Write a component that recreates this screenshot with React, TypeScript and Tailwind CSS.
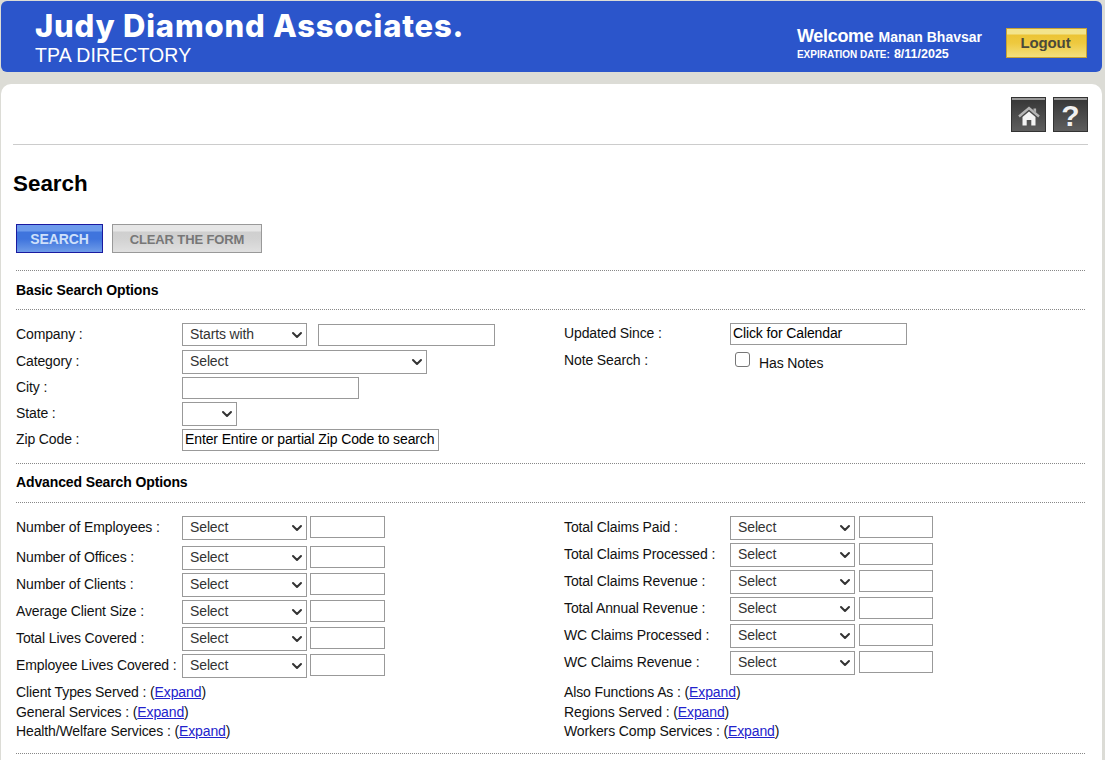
import { ChevronDown } from "lucide-react";

const inputClass =
  "block h-[22px] border border-[#999] bg-white px-[2px] pb-[2px] text-[14px] tracking-[-0.12px] text-black outline-none placeholder:text-black";
const selectClass =
  "block h-full w-full appearance-none rounded-none border border-[#999] bg-white pb-[2px] pl-[7px] text-[14px] tracking-[-0.12px] text-[#333] outline-none";
const iconButton =
  "flex h-[35px] w-[35px] items-center justify-center border border-[#333] bg-[linear-gradient(#999_0,#999_2px,#383838_2px,#5e5e5e_100%)] pt-[2px]";

function Dotted() {
  return <div className="ml-[15px] mr-[17px] border-t border-dotted border-[#888]" />;
}

function Select({ className, value = "Select" }: { className: string; value?: string }) {
  return (
    <div className={`relative ${className}`}>
      <select className={selectClass} defaultValue={value}>
        <option>{value}</option>
      </select>
      <ChevronDown
        className="pointer-events-none absolute right-[2px] top-[4px] h-[16px] w-[16px] text-[#333]"
        strokeWidth={3}
      />
    </div>
  );
}

function NumberRow({ label, rowClass, right }: { label: string; rowClass: string; right?: boolean }) {
  return (
    <div className={`flex items-start ${rowClass}`}>
      <span className="w-[166px] shrink-0 leading-[22px]">{label}</span>
      <Select className="h-[24px] w-[125px]" />
      <input className={`${inputClass} ${right ? "ml-[4px] w-[74px]" : "ml-[3px] w-[75px]"}`} />
    </div>
  );
}

function ExpandRow({ label }: { label: string }) {
  return (
    <div className="h-[19.5px] leading-[19.5px]">
      {label} : (
      <a href="#" className="text-[#2222cc] underline">
        Expand
      </a>
      )
    </div>
  );
}

export default function App() {
  const leftRows = [
    ["Number of Employees :", "h-[30px]"],
    ["Number of Offices :", "h-[27px]"],
    ["Number of Clients :", "h-[27px]"],
    ["Average Client Size :", "h-[27px]"],
    ["Total Lives Covered :", "h-[27px]"],
    ["Employee Lives Covered :", "h-[27px]"],
  ];
  const rightRows = [
    "Total Claims Paid :",
    "Total Claims Processed :",
    "Total Claims Revenue :",
    "Total Annual Revenue :",
    "WC Claims Processed :",
    "WC Claims Revenue :",
  ];

  return (
    <div className="h-[760px] overflow-hidden bg-[#dcdcd6] pt-px font-['Liberation_Sans',Arial,sans-serif] text-[14px] tracking-[-0.12px] text-[#111]">
      <header className="ml-px mr-[3px] flex h-[71px] justify-between rounded-[6px] bg-[#2b55cb] text-white">
        <div className="pl-[34px] pt-[7px]">
          <div className="font-['Inter',sans-serif] text-[31px] font-extrabold leading-[36px] tracking-[0.8px]">
            Judy Diamond Associates.
          </div>
          <div className="pt-px text-[19.5px] leading-[20px] tracking-[0.1px]">TPA DIRECTORY</div>
        </div>
        <div className="flex items-start">
          <div className="pt-[22px] font-bold">
            <div className="flex h-[21px] items-baseline gap-[5px]">
              <span className="text-[18px] tracking-[-0.3px]">Welcome</span>
              <span className="text-[14px] tracking-normal">Manan Bhavsar</span>
            </div>
            <div className="flex h-[21px] items-baseline gap-[4px] pt-px">
              <span className="text-[10px] tracking-normal">EXPIRATION DATE:</span>
              <span className="text-[12.5px] tracking-normal">8/11/2025</span>
            </div>
          </div>
          <button className="ml-[24px] mr-[15px] mt-[27px] h-[30px] w-[81px] border border-[#c8a233] bg-[linear-gradient(#f3e48c_0,#f3e48c_5px,#ecc435_6px,#eec93f_14px,#f3e07e_100%)] pr-[2px] pt-px text-[15px] font-bold text-[#4a4a3a]">
            Logout
          </button>
        </div>
      </header>

      <main className="ml-px mr-[3px] mt-[12px] h-[700px] rounded-t-[10px] bg-white">
        <div className="ml-[12px] mr-[14px] flex h-[61px] items-start justify-end gap-[7px] border-b border-[#ccc] pt-[13px]">
          <button className={iconButton}>
            <svg viewBox="0 0 22 20" className="h-[20px] w-[22px]">
              <path d="M1 10.5 11 2l10 8.5" fill="none" stroke="#b5b5b5" strokeWidth="2.4" />
              <path d="M15.5 2.5h2.6v4l-2.6-2.2z" fill="#b5b5b5" />
              <path d="M4.5 11 11 5.4l6.5 5.6v8.5h-4.2v-5.6H8.7v5.6H4.5z" fill="#f4f4f4" />
            </svg>
          </button>
          <button className={`${iconButton} text-[30px] font-bold leading-none tracking-normal text-[#f0f0f0]`}>
            ?
          </button>
        </div>

        <h1 className="ml-[12px] mt-[26px] text-[22.4px] font-bold leading-[26px] tracking-normal text-black">
          Search
        </h1>

        <div className="ml-[15px] mt-[27px] flex h-[29px] gap-[9px] pt-0 font-bold">
          <button className="w-[87px] border border-[#1a1aa0] bg-[linear-gradient(#6d9bec_0,#6d9bec_6px,#3f74dd_7px,#3f74dd_14px,#6f9ce8_100%)] pt-[2px] text-[14px] text-[#cfe0fa]">
            SEARCH
          </button>
          <button className="w-[150px] border border-[#999] bg-[linear-gradient(#e6e6e6_0,#e6e6e6_6px,#cfcfcf_7px,#d2d2d2_14px,#e0e0e0_100%)] pt-[2px] text-[13px] text-[#777]">
            CLEAR THE FORM
          </button>
        </div>

        <div className="mt-[17px]">
          <Dotted />
        </div>
        <div className="ml-[15px] h-[38px] pt-[11px] font-bold leading-[16px] text-black">Basic Search Options</div>
        <Dotted />

        <div className="flex h-[153px] pl-[15px] pt-[13px]">
          <div className="w-[548px] shrink-0">
            <div className="flex h-[27px] items-start">
              <span className="w-[166px] leading-[22px]">Company :</span>
              <Select className="h-[23px] w-[125px]" value="Starts with" />
              <input className={`${inputClass} ml-[11px] mt-px w-[177px]`} />
            </div>
            <div className="flex h-[27px] items-start">
              <span className="w-[166px] leading-[22px]">Category :</span>
              <Select className="h-[24px] w-[245px]" />
            </div>
            <div className="flex h-[25px] items-start">
              <span className="w-[166px] leading-[20px]">City :</span>
              <input className={`${inputClass} w-[177px]`} />
            </div>
            <div className="flex h-[27px] items-start">
              <span className="w-[166px] leading-[22px]">State :</span>
              <Select className="h-[24px] w-[55px]" value=" " />
            </div>
            <div className="flex h-[22px] items-start">
              <span className="w-[166px] leading-[20px]">Zip Code :</span>
              <input
                className={`${inputClass} w-[257px]`}
                placeholder="Enter Entire or partial Zip Code to search"
              />
            </div>
          </div>
          <div>
            <div className="flex h-[27px] items-start">
              <span className="w-[166px] leading-[21px]">Updated Since :</span>
              <input className={`${inputClass} w-[177px]`} placeholder="Click for Calendar" />
            </div>
            <div className="flex items-start">
              <span className="w-[171px] leading-[21px]">Note Search :</span>
              <input
                type="checkbox"
                className="mt-[2px] h-[15px] w-[15px] appearance-none rounded-[3px] border border-[#767676] bg-white"
              />
              <span className="ml-[9px] mt-[3px] leading-[20px]">Has Notes</span>
            </div>
          </div>
        </div>

        <Dotted />
        <div className="ml-[15px] h-[38px] pt-[10px] font-bold leading-[16px] text-black">Advanced Search Options</div>
        <Dotted />

        <div className="flex pl-[15px] pt-[13px]">
          <div className="w-[548px] shrink-0">
            {leftRows.map(([label, rowClass]) => (
              <NumberRow key={label} label={label} rowClass={rowClass} />
            ))}
          </div>
          <div>
            {rightRows.map((label) => (
              <NumberRow key={label} label={label} rowClass="h-[27px]" right />
            ))}
          </div>
        </div>

        <div className="flex pl-[15px] pt-[2px]">
          <div className="w-[548px] shrink-0">
            <ExpandRow label="Client Types Served" />
            <ExpandRow label="General Services" />
            <ExpandRow label="Health/Welfare Services" />
          </div>
          <div>
            <ExpandRow label="Also Functions As" />
            <ExpandRow label="Regions Served" />
            <ExpandRow label="Workers Comp Services" />
          </div>
        </div>

        <div className="mt-[11px]">
          <Dotted />
        </div>
      </main>
    </div>
  );
}
